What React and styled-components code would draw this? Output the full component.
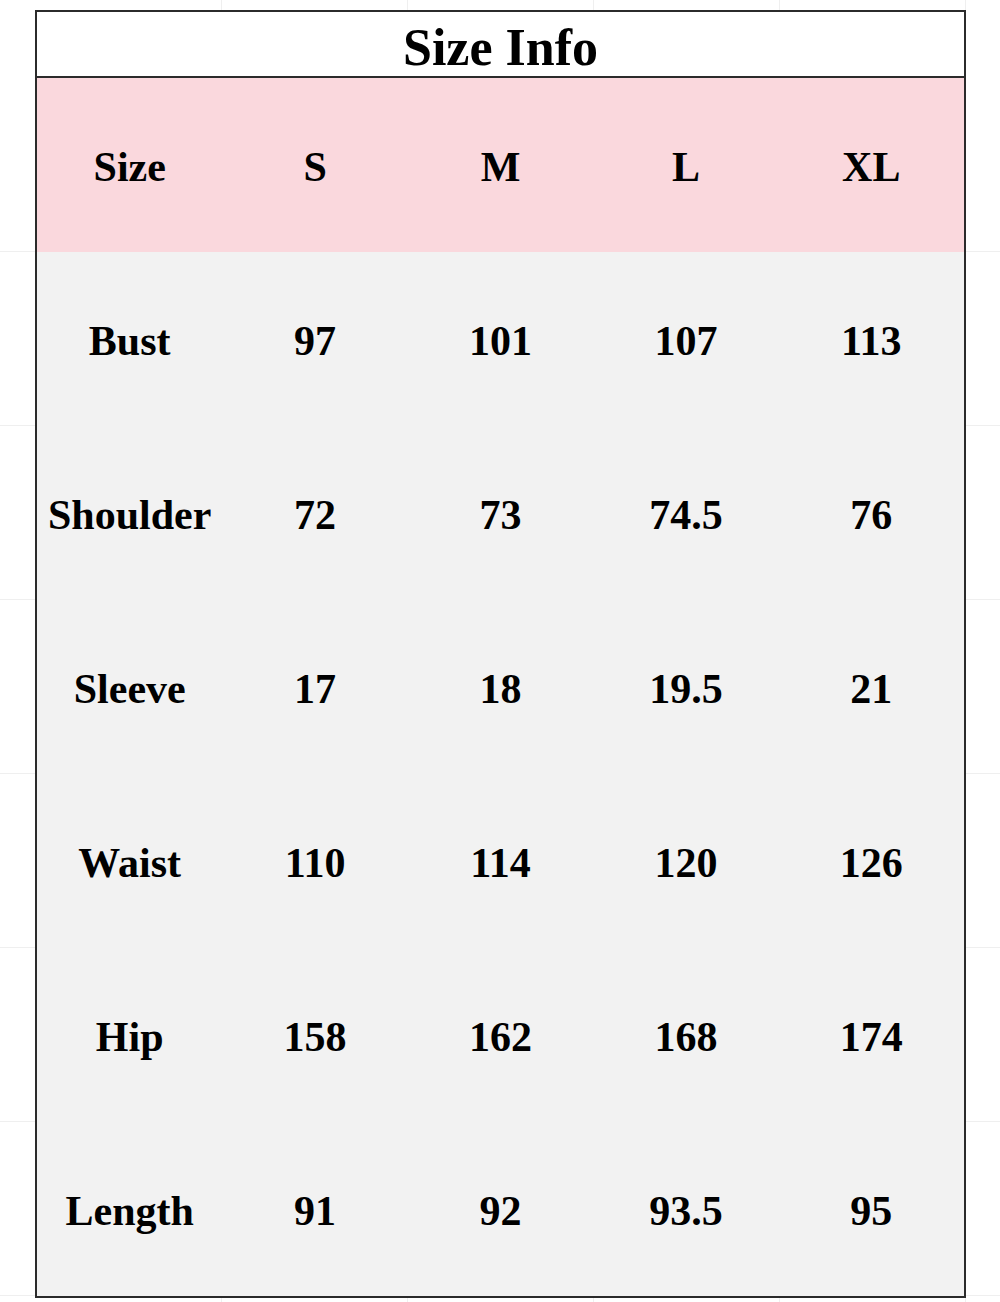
import React from "react";
import styled, { createGlobalStyle } from "styled-components";

const GlobalStyle = createGlobalStyle`
  html, body {
    margin: 0;
    padding: 0;
    background: #ffffff;
  }
  body {
    font-family: "Liberation Serif", "Times New Roman", serif;
    color: #000;
  }
`;

const sizes = ["S", "M", "L", "XL"];

const rows = [
  { label: "Bust", values: ["97", "101", "107", "113"] },
  { label: "Shoulder", values: ["72", "73", "74.5", "76"] },
  { label: "Sleeve", values: ["17", "18", "19.5", "21"] },
  { label: "Waist", values: ["110", "114", "120", "126"] },
  { label: "Hip", values: ["158", "162", "168", "174"] },
  { label: "Length", values: ["91", "92", "93.5", "95"] },
];

export default function App() {
  return (
    <>
      <GlobalStyle />
      <Sheet>
        <Chart>
          <Title>Size Info</Title>
          <Grid>
            <Cell head>Size</Cell>
            {sizes.map((s) => (
              <Cell head key={s}>{s}</Cell>
            ))}
            {rows.map((row) => (
              <React.Fragment key={row.label}>
                <Cell>{row.label}</Cell>
                {row.values.map((v, i) => (
                  <Cell key={i}>{v}</Cell>
                ))}
              </React.Fragment>
            ))}
          </Grid>
        </Chart>
      </Sheet>
    </>
  );
}

// faint spreadsheet gridlines peeking out around the chart
const Sheet = styled.div`
  height: 1302px;
  padding: 10px 0 0 35px;
  box-sizing: border-box;
  background-color: #fff;
  background-image:
    repeating-linear-gradient(to right, transparent 0 185px, #efefef 185px 186px),
    repeating-linear-gradient(to bottom, transparent 0 173px, #efefef 173px 174px);
  background-position: 36px 0, 0 78px;
`;

const Chart = styled.div`
  width: 931px;
  box-sizing: border-box;
  border: 2px solid #2b2b2b;
  background: #fff;
`;

const Title = styled.div`
  height: 66px;
  box-sizing: border-box;
  padding-top: 6px;
  border-bottom: 2px solid #2b2b2b;
  display: flex;
  align-items: center;
  justify-content: center;
  font-size: 52px;
  font-weight: bold;
`;

const Grid = styled.div`
  display: grid;
  grid-template-columns: repeat(5, 1fr);
  grid-auto-rows: 174px;
  background: #f2f2f2;
`;

const Cell = styled.div`
  display: flex;
  align-items: center;
  justify-content: center;
  padding-top: 4px;
  font-size: 42px;
  font-weight: bold;
  background: ${(p) => (p.head ? "#fad8dd" : "#f2f2f2")};
`;
